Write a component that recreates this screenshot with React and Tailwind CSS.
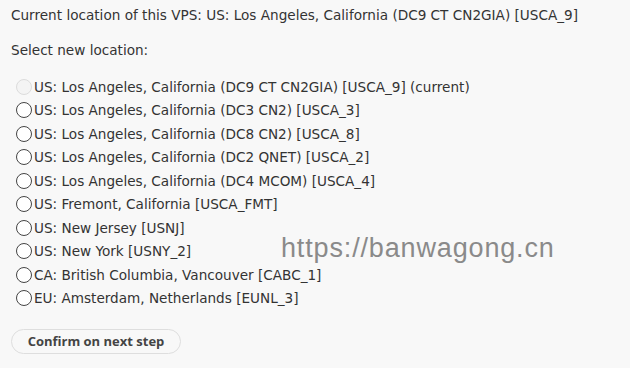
const locations = [
  { label: "US: Los Angeles, California (DC9 CT CN2GIA) [USCA_9] (current)", disabled: true },
  { label: "US: Los Angeles, California (DC3 CN2) [USCA_3]" },
  { label: "US: Los Angeles, California (DC8 CN2) [USCA_8]" },
  { label: "US: Los Angeles, California (DC2 QNET) [USCA_2]" },
  { label: "US: Los Angeles, California (DC4 MCOM) [USCA_4]" },
  { label: "US: Fremont, California [USCA_FMT]" },
  { label: "US: New Jersey [USNJ]" },
  { label: "US: New York [USNY_2]" },
  { label: "CA: British Columbia, Vancouver [CABC_1]" },
  { label: "EU: Amsterdam, Netherlands [EUNL_3]" },
];

function Radio({ disabled }) {
  return (
    <span
      className={
        "inline-block w-[16px] h-[16px] rounded-full border shrink-0 " +
        (disabled ? "border-[#dcdcdc] bg-[#f4f4f4]" : "border-[#444] bg-white")
      }
    />
  );
}

export default function App() {
  return (
    <div
      className="w-[630px] h-[368px] bg-[#f8f8f8] text-[#333] px-[11px] pt-[6px] relative overflow-hidden"
      style={{ fontFamily: "Verdana, 'DejaVu Sans', sans-serif" }}
    >
      <p className="text-[13.6px] leading-[18px]">
        Current location of this VPS: US: Los Angeles, California (DC9 CT CN2GIA) [USCA_9]
      </p>
      <p className="text-[13.6px] leading-[18px] mt-[17px]">Select new location:</p>

      <div className="mt-[16px] flex flex-col">
        {locations.map((loc) => (
          <label key={loc.label} className="flex items-center h-[23.5px] pl-[5px] text-[13.6px]">
            <Radio disabled={loc.disabled} />
            <span className="ml-[2px]">{loc.label}</span>
          </label>
        ))}
      </div>

      <button
        className="mt-[19px] w-[170px] h-[25px] rounded-full border border-[#dedede] bg-[#f8f8f8] text-[13px] font-bold text-[#444]"
        style={{ fontFamily: "'Open Sans', sans-serif" }}
      >
        Confirm on next step
      </button>

      <div
        className="absolute left-[281px] top-[228px] text-[27px] tracking-[0.85px] text-[#8a8a8a]"
        style={{ fontFamily: "'Liberation Sans', Arial, sans-serif" }}
      >
        https://banwagong.cn
      </div>
    </div>
  );
}
